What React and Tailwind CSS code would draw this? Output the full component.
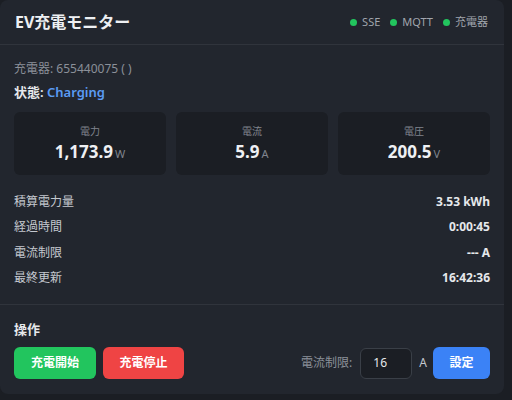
import React from 'react';

const font = { fontFamily: '"Noto Sans", "Noto Sans CJK JP", sans-serif' };

const metrics = [
    { label: '電力', value: '1,173.9', unit: 'W' },
    { label: '電流', value: '5.9', unit: 'A' },
    { label: '電圧', value: '200.5', unit: 'V' },
];

const rows = [
    { label: '積算電力量', value: '3.53 kWh' },
    { label: '経過時間', value: '0:00:45' },
    { label: '電流制限', value: '--- A' },
    { label: '最終更新', value: '16:42:36' },
];

function Dot({ label }) {
    return (
        <span className="flex items-center gap-[5px]">
            <span className="w-[7px] h-[7px] rounded-full bg-[#22c55e]"></span>
            <span>{label}</span>
        </span>
    );
}

export default function App() {
    return (
        <div className="w-[512px] h-[400px] bg-[#1b1e24] flex overflow-hidden" style={font}>
            <div className="w-[504px] h-[394px] bg-[#22262e] rounded-lg flex flex-col">
                {/* Header */}
                <div className="h-[45px] px-[15px] flex items-center justify-between border-b border-[#30343c]">
                    <h1 className="text-[16px] font-bold text-[#eef0f3]">EV充電モニター</h1>
                    <div className="flex items-center gap-[10px] text-[11px] text-[#a0a5ad] pr-[1px]">
                        <Dot label="SSE" />
                        <Dot label="MQTT" />
                        <Dot label="充電器" />
                    </div>
                </div>

                {/* Body */}
                <div className="px-[14px] pt-[14px] pb-[13px] border-b border-[#30343c]">
                    <div className="text-[12px] text-[#8b9099] leading-[20px]">充電器: 655440075 ( )</div>
                    <div className="text-[13px] font-semibold text-[#e6e8eb] leading-[20px] mt-[3px]">
                        状態: <span className="text-[#5b9cf5]">Charging</span>
                    </div>

                    <div className="grid grid-cols-3 gap-[10px] mt-[10px]">
                        {metrics.map((m) => (
                            <div key={m.label} className="h-[63px] bg-[#1b1e24] rounded-md flex flex-col items-center justify-center">
                                <div className="text-[10px] text-[#80858e] leading-[14px]">{m.label}</div>
                                <div className="mt-[4px] flex items-baseline gap-[2px]">
                                    <span className="text-[17px] font-bold text-[#eef0f3] leading-[20px]">{m.value}</span>
                                    <span className="text-[11px] text-[#80858e]">{m.unit}</span>
                                </div>
                            </div>
                        ))}
                    </div>

                    <div className="mt-[14px] flex flex-col">
                        {rows.map((r) => (
                            <div key={r.label} className="h-[25.5px] flex items-center justify-between text-[12px]">
                                <span className="text-[#c4c8ce]">{r.label}</span>
                                <span className="font-bold text-[#e6e8eb]">{r.value}</span>
                            </div>
                        ))}
                    </div>
                </div>

                {/* Actions */}
                <div className="px-[14px] pt-[14px]">
                    <div className="text-[13px] font-bold text-[#e6e8eb] leading-[20px]">操作</div>
                    <div className="mt-[8px] flex items-center">
                        <button className="w-[82px] h-[32px] rounded-md bg-[#22c55e] text-white text-[12px] font-bold">充電開始</button>
                        <button className="ml-[7px] w-[81px] h-[32px] rounded-md bg-[#ef4444] text-white text-[12px] font-bold">充電停止</button>
                        <div className="ml-auto flex items-center">
                            <span className="text-[12px] text-[#8b9099]">電流制限:</span>
                            <div className="ml-[8px] w-[52px] h-[31px] rounded-md bg-[#1b1e24] border border-[#3a3f47] flex items-center pl-[12px] text-[12px] text-[#e6e8eb]">16</div>
                            <span className="ml-[7px] text-[12px] text-[#c4c8ce]">A</span>
                            <button className="ml-[6px] w-[57px] h-[32px] rounded-md bg-[#3b82f6] text-white text-[12px] font-bold">設定</button>
                        </div>
                    </div>
                </div>
            </div>
        </div>
    );
}
